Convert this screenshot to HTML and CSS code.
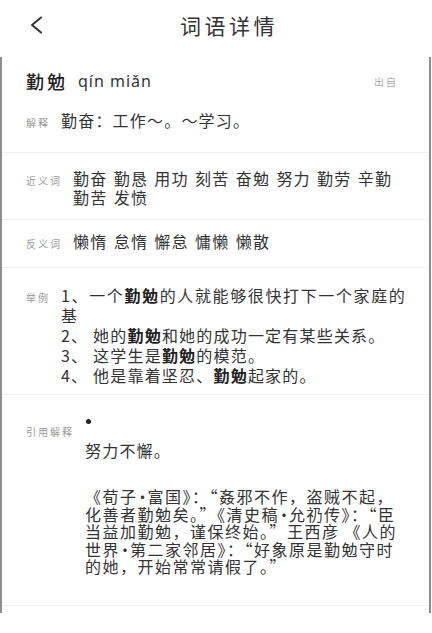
FILE: index.html
```html
<!DOCTYPE html>
<html lang="zh-CN">
<head>
<meta charset="utf-8">
<title>词语详情</title>
<link rel="stylesheet" href="styles.css">
</head>
<body>
<header class="topbar">
  <button class="back" aria-label="返回">
    <svg width="14" height="18" viewBox="0 0 14 18"><polyline points="11,1.5 2,9 11,16.5" fill="none" stroke="#333" stroke-width="2" stroke-linecap="round" stroke-linejoin="round"/></svg>
  </button>
  <h1 class="title">词语详情</h1>
</header>
<main class="card">
  <section class="sec sec-head">
    <div class="word-row">
      <span class="word">勤勉</span>
      <span class="pinyin">qín miǎn</span>
      <span class="source">出自</span>
    </div>
    <div class="row row-explain">
      <span class="label">解释</span>
      <div class="content">勤奋：工作～。～学习。</div>
    </div>
  </section>
  <section class="sec sec-syn">
    <div class="row">
      <span class="label">近义词</span>
      <div class="content words">勤奋 勤恳 用功 刻苦 奋勉 努力 勤劳 辛勤 勤苦 发愤</div>
    </div>
  </section>
  <section class="sec sec-ant">
    <div class="row">
      <span class="label">反义词</span>
      <div class="content words">懒惰 怠惰 懈怠 慵懒 懒散</div>
    </div>
  </section>
  <section class="sec sec-ex">
    <div class="row">
      <span class="label">举例</span>
      <div class="content">
        <p class="ex">1、一个<b>勤勉</b>的人就能够很快打下一个家庭的基</p>
        <p class="ex">2、 她的<b>勤勉</b>和她的成功一定有某些关系。</p>
        <p class="ex">3、 这学生是<b>勤勉</b>的模范。</p>
        <p class="ex">4、 他是靠着坚忍、<b>勤勉</b>起家的。</p>
      </div>
    </div>
  </section>
  <section class="sec sec-ref">
    <div class="row row-ref">
      <span class="label">引用解释</span>
      <div class="content">
        <div class="bullet"></div>
        <p class="ref-main">努力不懈。</p>
        <p class="ref-quote"><span class="ln">《荀子<span class="dot">·</span>富国》：“姦邪不作，盗贼不起，</span><span class="ln">化善者勤勉矣。”《清史稿<span class="dot">·</span>允礽传》：“臣</span><span class="ln">当益加勤勉，谨保终始。”王西彦 《人的</span><span class="ln">世界<span class="dot">·</span>第二家邻居》：“好象原是勤勉守时</span><span class="ln">的她，开始常常请假了。”</span></p>
      </div>
    </div>
  </section>
</main>
</body>
</html>
```
FILE: styles.css
```css
html, body {
  margin: 0;
  padding: 0;
  background: #fff;
}

body {
  font-family: "Noto Sans CJK SC", "Noto Sans", sans-serif;
  color: #333;
}

.topbar {
  display: flex;
  align-items: center;
  height: 57px;
  box-sizing: border-box;
  padding: 0 0 7px 30px;
}

.back {
  display: flex;
  width: 14px;
  height: 18px;
  padding: 0;
  border: 0;
  background: none;
}

.title {
  margin: 0 0 0 136px;
  font-size: 21px;
  font-weight: 400;
  letter-spacing: 3.5px;
  line-height: 28px;
  color: #333;
}

.card {
  border-left: 2px solid #8e8e8e;
  border-right: 2px solid #8e8e8e;
  margin-right: 1px;
  padding-bottom: 7px;
}

.sec {
  border-bottom: 1px solid #efefef;
  padding-left: 24px;
  padding-right: 23px;
}

.sec-head {
  padding-top: 12px;
  padding-bottom: 22px;
}

.word-row {
  display: flex;
  align-items: center;
  height: 24px;
}

.word {
  font-size: 18px;
  font-weight: 500;
  letter-spacing: 3px;
  color: #222;
  line-height: 24px;
}

.pinyin {
  margin-left: 10px;
  font-family: "Noto Sans", sans-serif;
  font-size: 16px;
  letter-spacing: 1px;
  color: #333;
}

.source {
  margin-left: auto;
  margin-right: 8px;
  font-size: 10px;
  letter-spacing: 2px;
  color: #aaa;
}

.row {
  display: flex;
  align-items: baseline;
  gap: 11px;
}

.row-explain {
  margin-top: 17px;
}

.label {
  flex: none;
  white-space: nowrap;
  font-size: 10px;
  letter-spacing: 2px;
  color: #999;
}

.content {
  flex: 1;
  min-width: 0;
  font-size: 16px;
  letter-spacing: 1.2px;
  line-height: 20px;
  color: #333;
}

.words {
  word-spacing: 1.5px;
  line-height: 19px;
}

.sec-syn {
  padding-top: 16px;
  padding-bottom: 12px;
}

.sec-ant {
  padding-top: 12px;
  padding-bottom: 16px;
}

.sec-ex {
  padding-top: 17px;
  padding-bottom: 9px;
}

.ex {
  margin: 0;
  text-align: justify;
}

.ex b {
  font-weight: 700;
  color: #222;
}

.sec-ref {
  padding-top: 18px;
  padding-bottom: 29px;
}

.row-ref {
  align-items: flex-start;
}

.row-ref .label {
  margin-top: 12px;
  line-height: 14px;
}

.bullet {
  width: 5px;
  height: 5px;
  margin: 6px 0 5px 1px;
  border-radius: 50%;
  background: #222;
}

.ref-main {
  margin: 16px 0 0;
  line-height: 20px;
}

.ref-quote {
  margin: 28px 0 0;
  font-size: 16px;
  letter-spacing: 1.5px;
  line-height: 17.5px;
}

.ln {
  display: block;
  white-space: nowrap;
}

.dot {
  letter-spacing: 0;
  margin: 0 -3px;
}
```
